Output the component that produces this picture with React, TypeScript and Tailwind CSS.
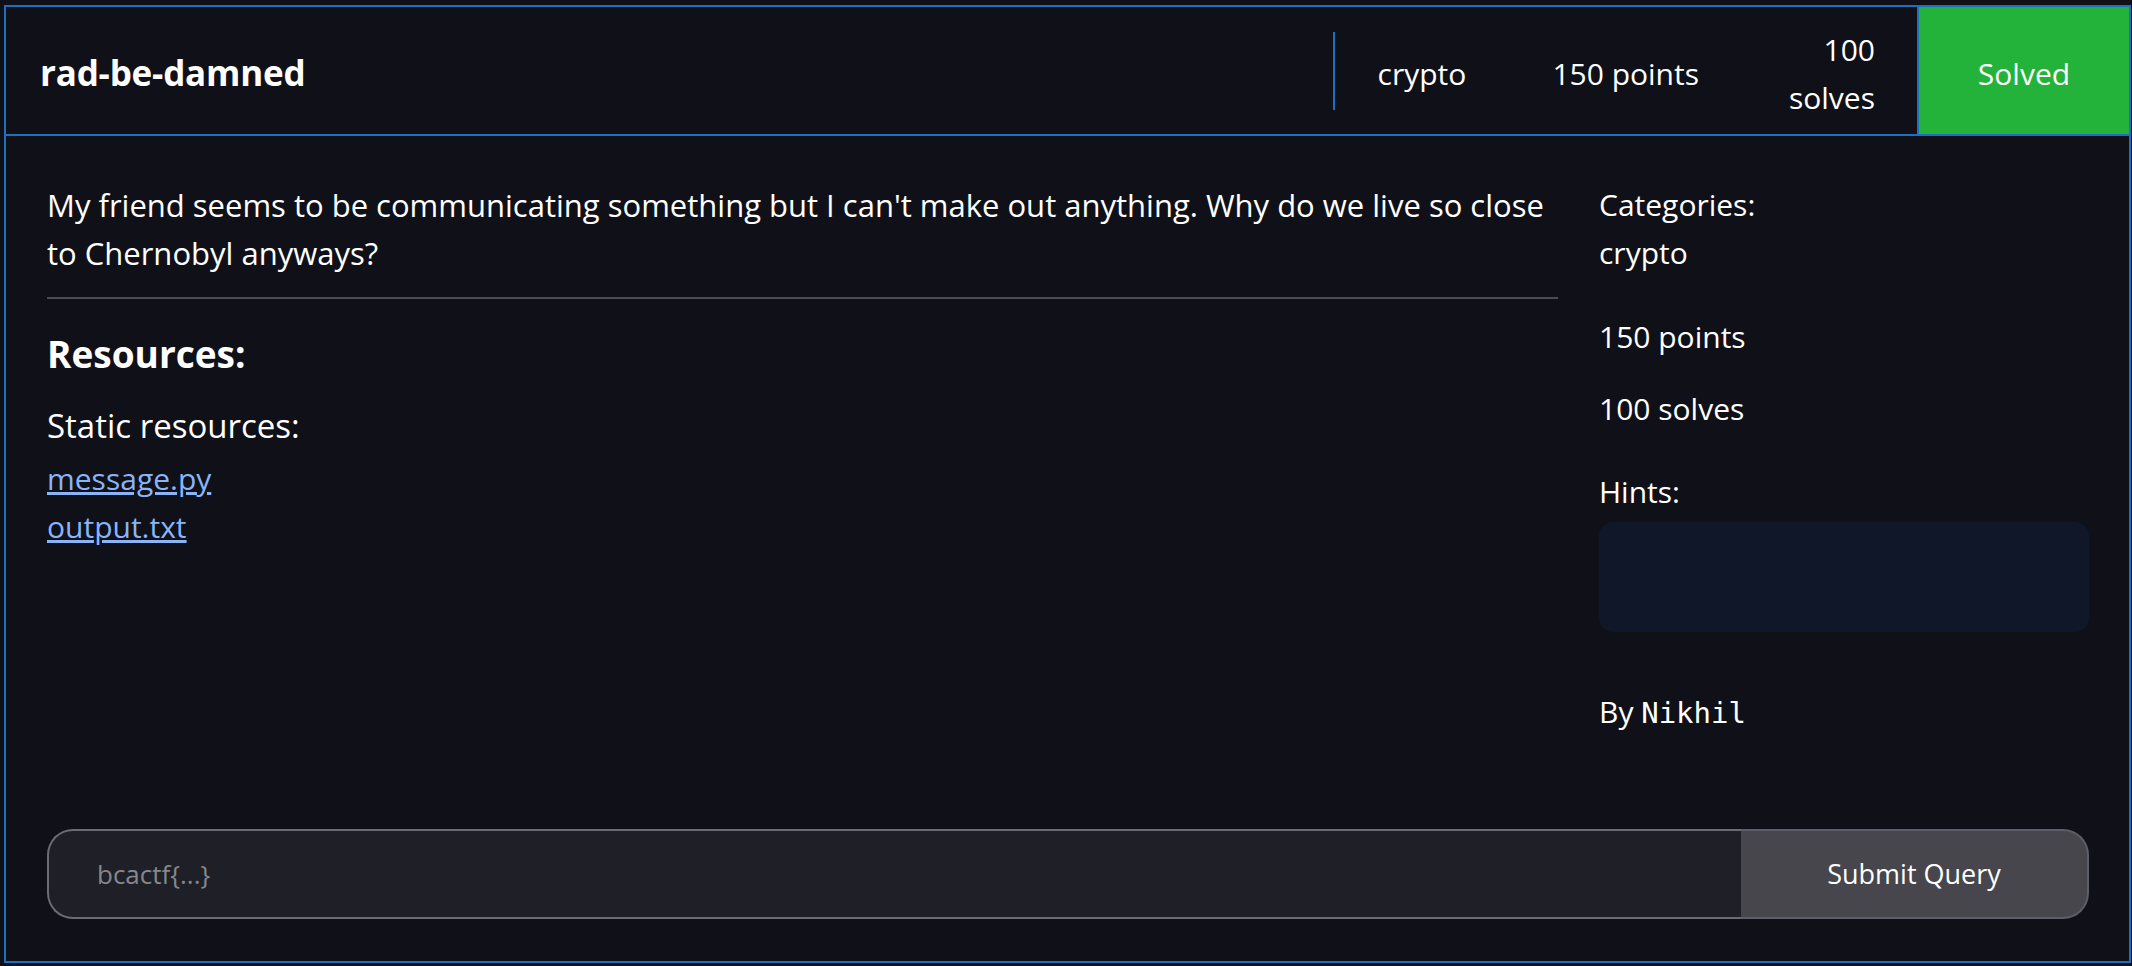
import React from 'react';

const sans = "font-['Open_Sans','Noto_Sans',sans-serif]";

const HeaderItem = ({ children, className = '' }: { children: React.ReactNode; className?: string }) => (
  <div className={`flex items-center pt-[6px] px-[43px] text-[30px] leading-[48px] text-white ${className}`}>{children}</div>
);

export default function App() {
  return (
    <div className={`h-screen overflow-hidden bg-[#101118] pt-[5px] pl-[4px] pr-[1px] ${sans}`}>
      <div className="h-[958px] border-2 border-[#1f6fbf] flex flex-col">
        {/* header */}
        <div className="h-[129px] shrink-0 border-b-2 border-[#1f6fbf] flex items-stretch">
          <div className="flex-1 flex items-center pt-[6px] pl-[34px]">
            <h1 className="text-[35px] font-bold text-white tracking-[-0.2px]">rad-be-damned</h1>
          </div>
          <div className="flex items-center">
            <div className="h-[78px] border-l-2 border-[#1f6fbf]" />
          </div>
          <HeaderItem>crypto</HeaderItem>
          <HeaderItem>150 points</HeaderItem>
          <HeaderItem className="pr-[42px] w-[175px] justify-end text-right">
            <span>100 solves</span>
          </HeaderItem>
          <div className="w-[212px] pt-[6px] bg-[#23b33a] border-l-2 border-[#1f6fbf] flex items-center justify-center text-[30px] text-white">
            Solved
          </div>
        </div>

        {/* body */}
        <div className="flex-1 flex flex-col pl-[41px] pr-[40px] pt-[45px] pb-[42px]">
          <div className="flex gap-[41px]">
            <div className="flex-1">
              <p className="text-[31px] leading-[48px] text-white">
                My friend seems to be communicating something but I can't make out anything. Why do we live so close to Chernobyl anyways?
              </p>
              <hr className="mt-[20px] border-t-2 border-[#4a4b53]" />
              <h2 className="mt-[26px] text-[37px] leading-[58px] font-bold text-white">Resources:</h2>
              <h3 className="mt-[16px] text-[33px] leading-[54px] text-white">Static resources:</h3>
              <div className="mt-[2px] flex flex-col text-[30px] leading-[48px]">
                <a href="#" className="text-[#8ab4f8] underline w-fit">message.py</a>
                <a href="#" className="text-[#8ab4f8] underline w-fit">output.txt</a>
              </div>
            </div>
            <div className="w-[490px] text-[30px] leading-[48px] text-white">
              <div>Categories:</div>
              <div>crypto</div>
              <div className="mt-[36px]">150 points</div>
              <div className="mt-[24px]">100 solves</div>
              <div className="mt-[35px]">Hints:</div>
              <div className="mt-[6px] h-[110px] rounded-[14px] bg-[#0f1729]" />
              <div className="mt-[56px]">
                By <span className="font-['DejaVu_Sans_Mono',monospace] text-[29px]">Nikhil</span>
              </div>
            </div>
          </div>

          <form className="mt-auto flex h-[90px]" onSubmit={(e) => e.preventDefault()}>
            <input
              type="text"
              placeholder="bcactf{...}"
              className="flex-1 min-w-0 h-full rounded-l-[26px] border-2 border-r-0 border-[#6a6b73] bg-[#1f2027] pl-[48px] text-[26px] text-white placeholder:text-[#86878d] outline-none"
            />
            <button
              type="submit"
              className="w-[348px] h-full rounded-r-[26px] border-2 border-l-0 border-[#5a5f6b] bg-[#46464c] text-[27px] text-white"
            >
              Submit Query
            </button>
          </form>
        </div>
      </div>
    </div>
  );
}
